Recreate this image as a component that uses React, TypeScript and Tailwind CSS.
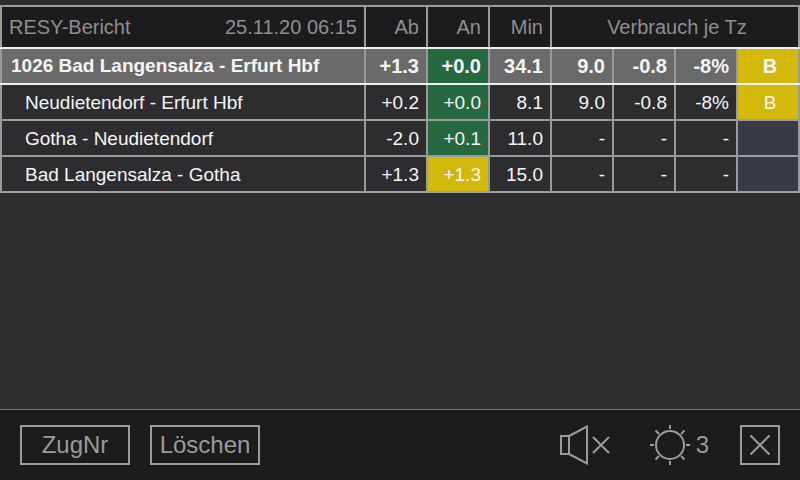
import React from 'react'

const sections = [
  { name: '1026 Bad Langensalza - Erfurt Hbf', ab: '+1.3', an: '+0.0', min: '34.1', usage: ['9.0', '-0.8', '-8%'], grade: 'B', total: true },
  { name: 'Neudietendorf - Erfurt Hbf', ab: '+0.2', an: '+0.0', min: '8.1', usage: ['9.0', '-0.8', '-8%'], grade: 'B' },
  { name: 'Gotha - Neudietendorf', ab: '-2.0', an: '+0.1', min: '11.0', usage: ['-', '-', '-'], grade: '' },
  { name: 'Bad Langensalza - Gotha', ab: '+1.3', an: '+1.3', min: '15.0', usage: ['-', '-', '-'], grade: '', late: true },
];

const SpeakerOff = () => (
  <svg width="50" height="40" viewBox="0 0 50 40" fill="none" stroke="currentColor" strokeWidth="2" aria-hidden="true">
    <path d="M1 11h8v18H1zM9 11L27 1.5v37L9 29" />
    <path d="M33 12l16 16M49 12L33 28" />
  </svg>
)

const Sun = () => (
  <svg width="40" height="40" viewBox="0 0 40 40" fill="none" stroke="currentColor" strokeWidth="2" aria-hidden="true">
    <circle cx="20" cy="20" r="14" />
    <path d="M20 0v4M20 36v4M0 20h4M36 20h4M5.5 5.5l3.5 3.5M34.5 5.5L31 9M5.5 34.5L9 31M34.5 34.5L31 31" />
  </svg>
)

const Close = () => (
  <svg width="22" height="22" viewBox="0 0 22 22" fill="none" stroke="currentColor" strokeWidth="2" aria-hidden="true">
    <path d="M1.5 1.5l19 19M20.5 1.5l-19 19" />
  </svg>
)

const Page = () => {
  return (
    <main className="flex flex-col min-h-screen bg-[#2d2d2f] font-['Liberation_Sans',Arial,sans-serif]">
      <table className="mt-[5px] w-full table-fixed border-collapse text-right text-[19px] leading-6 text-[#f5f5f7]">
        <colgroup>
          <col />
          <col className="w-[62px]" />
          <col className="w-[62px]" />
          <col className="w-[62px]" />
          <col className="w-[62px]" />
          <col className="w-[62px]" />
          <col className="w-[62px]" />
          <col className="w-[62px]" />
        </colgroup>
        <thead>
          <tr className="h-[42px] bg-[#1c1c1c] text-[20px] text-[#8e8e96]">
            <th className="border-2 border-[#9b9b9b] border-b-[#f0f0f2] px-[7px] font-normal">
              <div className="flex justify-between">
                <span>RESY-Bericht</span>
                <time>25.11.20 06:15</time>
              </div>
            </th>
            <th className="border-2 border-[#9b9b9b] border-b-[#f0f0f2] px-[7px] font-normal">Ab</th>
            <th className="border-2 border-[#9b9b9b] border-b-[#f0f0f2] px-[7px] font-normal">An</th>
            <th className="border-2 border-[#9b9b9b] border-b-[#f0f0f2] px-[7px] font-normal">Min</th>
            <th colSpan={4} className="border-2 border-[#9b9b9b] border-b-[#f0f0f2] pl-1 text-center font-normal">Verbrauch je Tz</th>
          </tr>
        </thead>
        <tbody>
          {sections.map((s) => {
            const cell = s.total
              ? 'border-2 border-x-[#9b9b9b] border-y-[#f0f0f2] pr-[7px]'
              : 'border-2 border-[#9b9b9b] pt-[2px] pr-[7px]';
            return (
              <tr key={s.name} className={s.total ? 'h-9 bg-[#6a6a6a] text-[20px] font-bold' : 'h-9'}>
                <td className={`${cell} text-left text-[19px] whitespace-nowrap ${s.total ? 'pl-[9px]' : 'pl-[23px]'}`}>{s.name}</td>
                <td className={cell}>{s.ab}</td>
                <td className={`${cell} ${s.late ? 'bg-[#d2b80a]' : 'bg-[#266840]'}`}>{s.an}</td>
                <td className={cell}>{s.min}</td>
                {s.usage.map((value, i) => (
                  <td key={i} className={cell}>{value}</td>
                ))}
                <td className={`${cell} pl-[11px] text-center ${s.grade ? 'bg-[#d2b80a]' : 'bg-[#383a43]'}`}>{s.grade}</td>
              </tr>
            );
          })}
        </tbody>
      </table>

      <footer className="mt-auto flex items-center gap-5 border-t border-[#77777f] bg-[#1c1c1c] px-5 py-[15px] text-2xl leading-9 text-[#9b9b9b]">
        <button type="button" className="w-[110px] border-2 border-[#9b9b9b]">ZugNr</button>
        <button type="button" className="w-[110px] border-2 border-[#9b9b9b]">Löschen</button>
        <button type="button" aria-label="Ton aus" className="ml-auto">
          <SpeakerOff />
        </button>
        <button type="button" aria-label="Helligkeit" className="ml-5 flex items-center gap-[6px]">
          <Sun />
          3
        </button>
        <button type="button" aria-label="Schließen" className="ml-[11px] flex size-10 items-center justify-center border-2 border-[#9b9b9b]">
          <Close />
        </button>
      </footer>
    </main>
  );
}

export default Page
